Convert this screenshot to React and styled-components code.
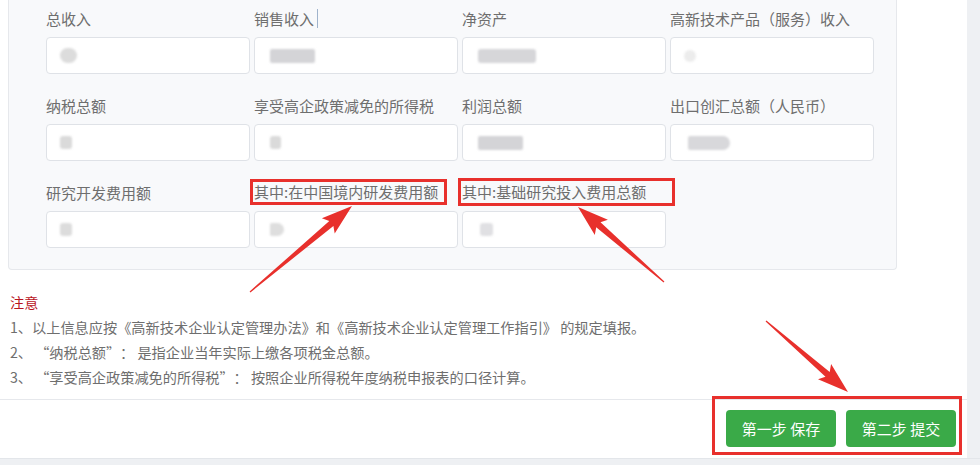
import React from "react";
import styled, { createGlobalStyle } from "styled-components";

const GlobalStyle = createGlobalStyle`
  html, body {
    margin: 0;
    padding: 0;
    background: #eef0f3;
  }
  body {
    font-family: "Noto Sans CJK SC", "Noto Sans", sans-serif;
  }
`;

const fields = [
  { label: "总收入", blot: { x: 0, w: 17, h: 15, r: 8, c: "#dcdcdc" } },
  { label: "销售收入", caret: true, blot: { x: 2, w: 45, h: 14, r: 2, c: "#d4d4d7" } },
  { label: "净资产", blot: { x: 2, w: 58, h: 14, r: 3, c: "#d6d6d9" } },
  { label: "高新技术产品（服务）收入", blot: { x: 0, w: 12, h: 12, r: 6, c: "#ececec" } },
  { label: "纳税总额", blot: { x: 0, w: 12, h: 13, r: 3, c: "#dadada" } },
  { label: "享受高企政策减免的所得税", blot: { x: 2, w: 11, h: 13, r: 3, c: "#dadada" } },
  { label: "利润总额", blot: { x: 2, w: 45, h: 14, r: 2, c: "#d4d4d7" } },
  { label: "出口创汇总额（人民币）", blot: { x: 4, w: 42, h: 14, r: "2px 7px 7px 2px", c: "#d8d8db" } },
  { label: "研究开发费用额", blot: { x: 0, w: 12, h: 13, r: 3, c: "#dcdcdc" } },
  { label: "其中:在中国境内研发费用额", mark: "narrow", blot: { x: 2, w: 14, h: 13, r: "2px 7px 7px 2px", c: "#dedede" } },
  { label: "其中:基础研究投入费用总额", mark: "wide", blot: { x: 4, w: 13, h: 13, r: 3, c: "#e0e0e3" } },
];

const notes = [
  "1、以上信息应按《高新技术企业认定管理办法》和《高新技术企业认定管理工作指引》 的规定填报。",
  "2、 “纳税总额”： 是指企业当年实际上缴各项税金总额。",
  "3、 “享受高企政策减免的所得税”： 按照企业所得税年度纳税申报表的口径计算。",
];

const arrows = [
  [250, 292, 352, 206],
  [664, 282, 578, 207],
  [766, 321, 848, 392],
];

function arrowPoints(x1, y1, x2, y2) {
  const dx = x2 - x1;
  const dy = y2 - y1;
  const len = Math.hypot(dx, dy);
  const ux = dx / len;
  const uy = dy / len;
  const nx = -uy;
  const ny = ux;
  const head = 27;
  const nxp = x2 - ux * head;
  const nyp = y2 - uy * head;
  const bx = nxp - ux * 4;
  const by = nyp - uy * 4;
  const p = (x, y) => `${x.toFixed(1)},${y.toFixed(1)}`;
  return [
    p(x1 + nx * 0.6, y1 + ny * 0.6),
    p(nxp + nx * 3.2, nyp + ny * 3.2),
    p(bx + nx * 10, by + ny * 10),
    p(x2, y2),
    p(bx - nx * 10, by - ny * 10),
    p(nxp - nx * 3.2, nyp - ny * 3.2),
    p(x1 - nx * 0.6, y1 - ny * 0.6),
  ].join(" ");
}

// curly quotes take a full em box, as in the original font
function noteParts(text) {
  return text.split(/([“”])/).map((part, i) => {
    if (part === "“") return <Quote key={i} open>{part}</Quote>;
    if (part === "”") return <Quote key={i}>{part}</Quote>;
    return part;
  });
}

export default function App() {
  return (
    <Page>
      <GlobalStyle />
      <Body>
        <Main>
          <Content>
            <Panel>
              <FieldGrid>
                {fields.map((f) => (
                  <Field key={f.label}>
                    <Label>
                      {f.mark ? (
                        <Marked wide={f.mark === "wide"}>{f.label}</Marked>
                      ) : (
                        f.label
                      )}
                      {f.caret && <Caret />}
                    </Label>
                    <InputBox>
                      <Blot
                        style={{
                          marginLeft: f.blot.x,
                          width: f.blot.w,
                          height: f.blot.h,
                          borderRadius: f.blot.r,
                          background: f.blot.c,
                        }}
                      />
                    </InputBox>
                  </Field>
                ))}
              </FieldGrid>
            </Panel>
            <Notes>
              <NoteTitle>注意</NoteTitle>
              {notes.map((n) => (
                <NoteLine key={n}>{noteParts(n)}</NoteLine>
              ))}
            </Notes>
          </Content>
          <Footer>
            <StepButton>第一步 保存</StepButton>
            <StepButton>第二步 提交</StepButton>
          </Footer>
        </Main>
        <SideStrip />
      </Body>
      <BottomStrip />
      <Annotations width="980" height="465" viewBox="0 0 980 465">
        {arrows.map((a, i) => (
          <polygon key={i} points={arrowPoints(...a)} fill="#e8302c" />
        ))}
        <rect x="713.5" y="397.5" width="247" height="56" fill="none" stroke="#e8302c" strokeWidth="3" />
      </Annotations>
    </Page>
  );
}

const Page = styled.div`
  position: relative;
  width: 980px;
  height: 465px;
  display: flex;
  flex-direction: column;
  background: #eef0f3;
  overflow: hidden;
`;

const Body = styled.div`
  display: flex;
  height: 459px;
`;

const Main = styled.div`
  width: 967px;
  background: #ffffff;
  display: flex;
  flex-direction: column;
`;

const SideStrip = styled.div`
  flex: 1;
  background: #eef0f3;
`;

const BottomStrip = styled.div`
  height: 6px;
  background: #eef0f3;
  border-top: 1px solid #e3e6ea;
`;

const Content = styled.div`
  flex: 1;
  padding-left: 8px;
`;

const Panel = styled.div`
  width: 889px;
  box-sizing: border-box;
  background: #f8f9fb;
  border: 1px solid #e6e8ec;
  border-top: none;
  border-radius: 0 0 4px 4px;
  padding: 8px 22px 21px 37px;
`;

const FieldGrid = styled.div`
  display: grid;
  grid-template-columns: repeat(4, 204px);
  column-gap: 4px;
  row-gap: 21px;
`;

const Field = styled.div`
  display: flex;
  flex-direction: column;
`;

const Label = styled.div`
  display: flex;
  align-items: center;
  height: 20px;
  margin-bottom: 9px;
  font-size: 15px;
  color: #6e6e6e;
  white-space: nowrap;
`;

const Marked = styled.span`
  display: inline-block;
  margin-left: -4px;
  border: 3px solid #e8302c;
  padding: ${(p) => (p.wide ? "1px 26px 1px 1px" : "0 6px 0 1px")};
  line-height: 20px;
`;

const Caret = styled.span`
  display: inline-block;
  width: 1px;
  height: 19px;
  margin-left: 3px;
  background: #9fb3cc;
`;

const InputBox = styled.div`
  box-sizing: border-box;
  height: 37px;
  background: #ffffff;
  border: 1px solid #dfe2e7;
  border-radius: 4px;
  display: flex;
  align-items: center;
  padding-left: 13px;
`;

const Blot = styled.span`
  display: block;
  filter: blur(1.2px);
`;

const Notes = styled.div`
  padding: 20px 0 0 2px;
  font-size: 14.2px;
  line-height: 25px;
  color: #6e6e6e;
`;

const NoteTitle = styled.div`
  color: #b8141e;
`;

const NoteLine = styled.div`
  white-space: nowrap;
`;

const Quote = styled.span`
  display: inline-block;
  width: 14px;
  text-align: ${(p) => (p.open ? "right" : "left")};
`;

const Footer = styled.div`
  height: 59px;
  box-sizing: border-box;
  border-top: 1px solid #e6e8ec;
  display: flex;
  justify-content: flex-end;
  align-items: flex-start;
  gap: 10px;
  padding: 10px 11px 0 0;
`;

const StepButton = styled.button`
  width: 110px;
  height: 37px;
  border: none;
  border-radius: 4px;
  background: #3aaa48;
  color: #ffffff;
  font-family: "Noto Sans CJK SC", "Noto Sans", sans-serif;
  font-size: 15px;
  cursor: pointer;
`;

const Annotations = styled.svg`
  position: absolute;
  top: 0;
  left: 0;
  pointer-events: none;
`;
